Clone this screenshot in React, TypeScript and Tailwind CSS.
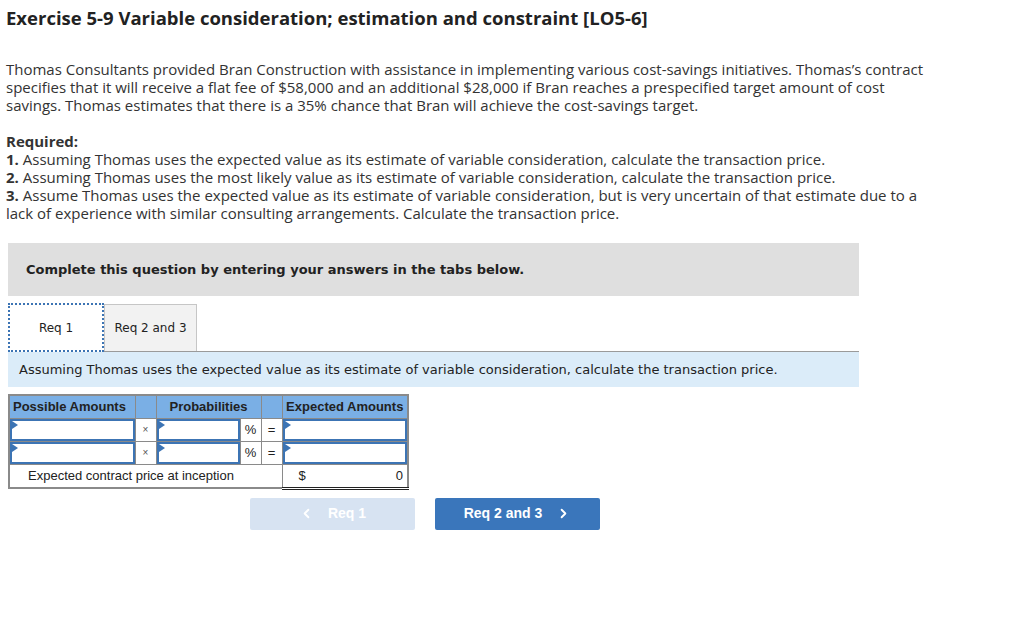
import { ChevronLeft, ChevronRight } from 'lucide-react';

const body = { fontFamily: '"Open Sans", Lato, sans-serif' };
const verdana = { fontFamily: '"DejaVu Sans", Verdana, sans-serif' };
const arial = { fontFamily: '"Liberation Sans", Arial, sans-serif' };

function Cell({ className = '' }: { className?: string }) {
  return (
    <td className={`relative border border-[#8a8a8a] p-0 ${className}`}>
      <div className="relative h-[22px] border-2 border-[#3c74b4] bg-white">
        <span className="absolute left-0 top-0 h-0 w-0 border-y-[4px] border-l-[6px] border-y-transparent border-l-[#3c74b4]" />
      </div>
    </td>
  );
}

function InputRow() {
  return (
    <tr className="h-[23px]">
      <Cell className="w-[126px]" />
      <td className="w-[21px] border border-[#8a8a8a] text-center text-[10px] text-[#555]">×</td>
      <Cell className="w-[84px]" />
      <td className="w-[21px] border border-[#8a8a8a] text-center text-[13px]">%</td>
      <td className="w-[21px] border border-[#8a8a8a] text-center text-[13px]">=</td>
      <Cell />
    </tr>
  );
}

export default function App() {
  return (
    <div className="min-h-screen w-[1014px] bg-white text-[#333]" style={body}>
      <h1 className="px-[6px] pt-[6px] text-[18.5px] font-bold leading-6 text-[#222]">
        Exercise 5-9 Variable consideration; estimation and constraint [LO5-6]
      </h1>

      <p className="mt-[30px] w-[935px] px-[6px] text-[15px] leading-[18px]">
        Thomas Consultants provided Bran Construction with assistance in implementing various cost-savings initiatives. Thomas’s contract specifies that it will receive a flat fee of $58,000 and an additional $28,000 if Bran reaches a prespecified target amount of cost savings. Thomas estimates that there is a 35% chance that Bran will achieve the cost-savings target.
      </p>

      <div className="mt-[18px] w-[935px] px-[6px] text-[15px] leading-[18px]">
        <div className="font-bold">Required:</div>
        <div><b>1.</b> <span>Assuming Thomas uses the expected value as its estimate of variable consideration, calculate the transaction price.</span></div>
        <div><b>2.</b> <span>Assuming Thomas uses the most likely value as its estimate of variable consideration, calculate the transaction price.</span></div>
        <div><b>3.</b> <span>Assume Thomas uses the expected value as its estimate of variable consideration, but is very uncertain of that estimate due to a lack of experience with similar consulting arrangements. Calculate the transaction price.</span></div>
      </div>

      <div className="ml-2 mt-[21px] w-[851px]" style={verdana}>
        <div className="flex h-[53px] items-center bg-[#dfdfdf] px-[18px] text-[13px] font-bold text-[#222]">
          Complete this question by entering your answers in the tabs below.
        </div>

        <div className="mt-[7px] flex items-end border-b border-[#9a9a9a]">
          <div className="-mb-px flex h-[49px] w-[96px] items-center justify-center border-2 border-dotted border-[#3c74b4] bg-white text-[12px] text-[#222]">
            Req 1
          </div>
          <div className="flex h-[47px] w-[93px] items-center justify-center border border-b-0 border-[#c6c6c6] bg-[#f2f2f2] text-[12px] text-[#222]">
            Req 2 and 3
          </div>
        </div>

        <div className="flex h-[35px] items-center bg-[#dbecf9] px-[11px] text-[13px] text-[#222]">
          Assuming Thomas uses the expected value as its estimate of variable consideration, calculate the transaction price.
        </div>
      </div>

      <table className="ml-2 mt-[7px] w-[401px] border-collapse border-2 border-[#8a8a8a] text-[13px] text-[#222]" style={arial}>
        <tbody>
          <tr className="h-[23px] bg-[#7aafe5] font-bold">
            <td className="border border-[#8a8a8a] px-[3px] text-left">Possible Amounts</td>
            <td className="border border-[#8a8a8a]" />
            <td colSpan={2} className="border border-[#8a8a8a] text-center">Probabilities</td>
            <td className="border border-[#8a8a8a]" />
            <td className="border border-[#8a8a8a] text-center">Expected Amounts</td>
          </tr>
          <InputRow />
          <InputRow />
          <tr className="h-[24px]">
            <td colSpan={5} className="border border-[#8a8a8a] pl-[18px] text-[13px]">
              Expected contract price at inception
            </td>
            <td className="border-b-[3px] border-double border-b-[#222] border-r border-r-[#8a8a8a] px-1 text-[13px]">
              <div className="flex justify-between pl-[12px]">
                <span>$</span>
                <span>0</span>
              </div>
            </td>
          </tr>
        </tbody>
      </table>

      <div className="ml-[250px] mt-[8px] flex gap-[20px]" style={arial}>
        <button className="flex h-[32px] w-[165px] items-center justify-center gap-[14px] rounded-[2px] bg-[#d7e3f2] text-[14px] font-bold text-white">
          <ChevronLeft size={15} strokeWidth={3} />
          Req 1
        </button>
        <button className="flex h-[32px] w-[165px] items-center justify-center gap-[14px] rounded-[2px] bg-[#3a76bb] text-[14px] font-bold text-white">
          Req 2 and 3
          <ChevronRight size={15} strokeWidth={3} />
        </button>
      </div>
    </div>
  );
}
